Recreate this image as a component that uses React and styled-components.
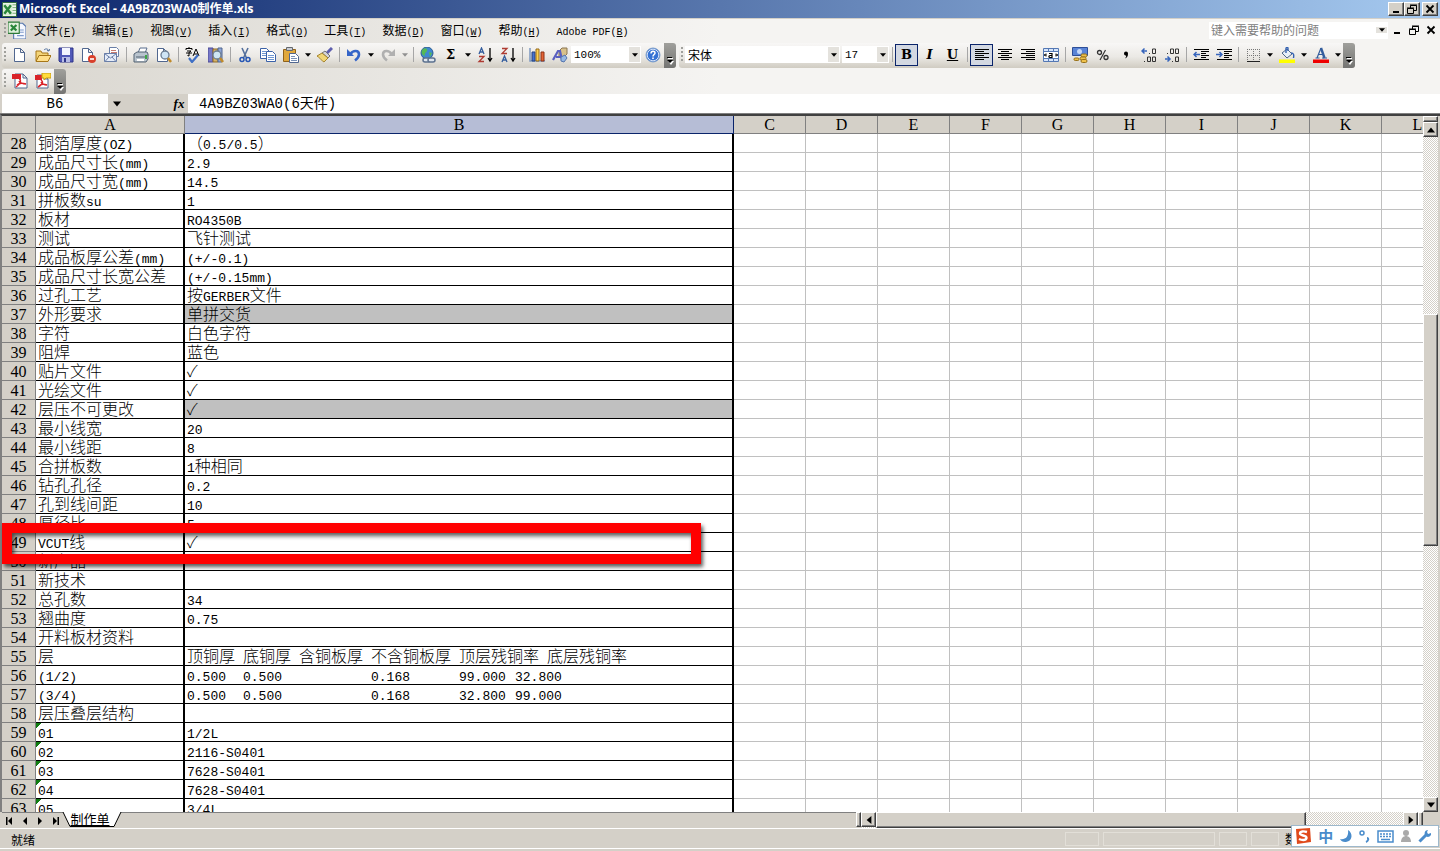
import React from 'react'
import styled, { createGlobalStyle, css, ThemeProvider } from 'styled-components'

const theme = {
  face: '#d4d0c8',
  border: '#808080',
  grid: '#c0c0c0',
  navy: '#0a246a',
  selected: '#b6bdd6',
  cjk: "'Noto Sans CJK SC', sans-serif",
  mono: "'Liberation Mono', 'Noto Sans CJK SC', monospace",
  serif: "'Liberation Serif', 'Noto Sans CJK SC', serif",
}

const GlobalStyle = createGlobalStyle`
  * {
    box-sizing: border-box;
  }
  body {
    margin: 0;
    overflow: hidden;
    background: #d4d0c8;
    color: #000;
  }
  button, input, select {
    margin: 0;
    padding: 0;
    border: 0;
    border-radius: 0;
    background: none;
    color: inherit;
    font: inherit;
    outline: none;
  }
  select {
    appearance: none;
  }
  svg {
    display: block;
    flex: none;
  }
`

const Window = styled.div`
  display: flex;
  flex-direction: column;
  height: 100vh;
  font-family: ${({ theme }) => theme.mono};
  font-size: 12px;
`

const TitleBar = styled.header`
  display: flex;
  align-items: center;
  height: 19px;
  padding: 0 2px;
  border-bottom: 1px solid #d4d0c8;
  background: linear-gradient(90deg, #0a246a, #a6caf0);
  color: #fff;
  h1 {
    flex: 1;
    margin: 0 0 0 2px;
    font: bold 12px/18px 'Open Sans', 'Noto Sans CJK SC', sans-serif;
    white-space: nowrap;
  }
`

const raised = css`
  border: 1px solid;
  border-color: #fff #404040 #404040 #fff;
  box-shadow: inset -1px -1px 0 #808080;
  background: ${({ theme }) => theme.face};
`

const CaptionButton = styled.button`
  ${raised}
  display: flex;
  align-items: center;
  justify-content: center;
  width: 16px;
  height: 14px;
  margin-left: ${({ $gap }) => ($gap ? '2px' : '0')};
  color: #000;
`

const Bars = styled.div`
  background: linear-gradient(90deg, #d9d6cf 0, #f5f4f2 50%);
`

const MenuBar = styled.nav`
  display: flex;
  align-items: center;
  height: 24px;
  padding: 0 1px 2px 2px;
`

const MenuButton = styled.button`
  flex: none;
  height: 20px;
  padding: 0 8px;
  font-family: ${({ theme }) => theme.cjk};
  font-size: 12px;
  line-height: 20px;
  white-space: nowrap;
  span {
    font-family: ${({ theme }) => theme.mono};
    font-size: 10px;
  }
`

const HelpBox = styled.div`
  display: flex;
  align-items: center;
  width: 179px;
  height: 17px;
  margin-left: auto;
  background: #fff;
  input {
    flex: 1;
    min-width: 0;
    padding: 0 2px;
    font: 12px/16px ${({ theme }) => theme.cjk};
  }
  input::placeholder {
    color: #808080;
    opacity: 1;
  }
`

const MdiButton = styled.button`
  display: flex;
  align-items: center;
  justify-content: center;
  width: 17px;
  height: 16px;
`

const ToolRow = styled.div`
  display: flex;
  gap: 3px;
  height: ${({ $short }) => ($short ? '25px' : '26px')};
  padding-left: 2px;
`

const ToolBar = styled.div`
  display: flex;
  align-items: center;
  height: 25px;
  padding-bottom: 2px;
  border-radius: 3px;
  background: linear-gradient(#f8f7f6, #ebe9e5 55%, #d0ccc2);
`

const Grip = styled.span`
  width: 6px;
  height: 15px;
  background: repeating-linear-gradient(#a0a09c 0 2px, transparent 2px 4px) 2px 0 / 2px 15px no-repeat;
`

const Divider = styled.span`
  width: 1px;
  height: 15px;
  margin: 0 2px 0 3px;
  background: #a6a6a6;
`

const ToolButton = styled.button`
  display: flex;
  align-items: center;
  justify-content: center;
  width: 23px;
  height: 22px;
  ${({ $on, theme }) =>
    $on &&
    css`
      border: 1px solid ${theme.navy};
      background: #d3d8e2;
    `}
`

const Letter = styled.span`
  font-family: 'DejaVu Serif', serif;
  font-size: 13px;
  font-weight: bold;
  font-style: ${({ $italic }) => ($italic ? 'italic' : 'normal')};
  line-height: 16px;
  text-decoration: ${({ $underline }) => ($underline ? 'underline' : 'none')};
`

const CaretButton = styled.button`
  display: flex;
  align-items: center;
  justify-content: center;
  width: 11px;
  height: 22px;
  color: ${({ disabled }) => (disabled ? '#909090' : '#000')};
`

const EndCap = styled.button`
  display: flex;
  align-items: flex-end;
  justify-content: center;
  width: 12px;
  height: 25px;
  margin-bottom: -2px;
  padding-bottom: 3px;
  border-radius: 0 3px 3px 0;
  background: linear-gradient(#a0a09c, #747472);
`

const Combo = styled.label`
  display: flex;
  width: ${({ $width }) => $width}px;
  height: 17px;
  margin-right: ${({ $gap }) => $gap || 0}px;
  background: #fff;
  select {
    flex: 1;
    min-width: 0;
    padding-left: 3px;
    font-family: ${({ $cjk, theme }) => ($cjk ? theme.cjk : theme.mono)};
    font-size: ${({ $cjk }) => ($cjk ? 12 : 11)}px;
    line-height: 14px;
  }
`

const ComboArrow = styled.span`
  display: flex;
  align-items: center;
  justify-content: center;
  width: 11px;
  margin: 1px;
  background: #e4e2dd;
`

const FormulaBar = styled.div`
  display: flex;
  height: 20px;
  padding-left: 2px;
  border-bottom: 1px solid ${({ theme }) => theme.border};
  background: ${({ theme }) => theme.face};
  font-size: 14px;
  input {
    min-width: 0;
    background: #fff;
    line-height: 18px;
  }
`

const NameBox = styled.input`
  width: 106px;
  text-align: center;
`

const NameArrow = styled.button`
  display: flex;
  align-items: center;
  justify-content: center;
  width: 17px;
`

const FxButton = styled.button`
  width: 18px;
  margin-left: 45px;
  font: italic bold 13px/17px 'Liberation Serif', serif;
`

const FormulaInput = styled.input`
  flex: 1;
  padding-left: 11px;
`

const Workbook = styled.main`
  position: relative;
  display: flex;
  flex: 1;
  min-height: 0;
  border-top: 2px solid #404040;
  border-left: 2px solid #808080;
`

const SheetPane = styled.div`
  flex: 1;
  min-width: 0;
  overflow: hidden;
  background: #fff;
`

const Sheet = styled.table`
  width: 1452px;
  table-layout: fixed;
  border-collapse: separate;
  border-spacing: 0;
`

const Col = styled.col`
  width: ${({ $width }) => $width}px;
`

const ColumnHead = styled.th`
  height: 18px;
  padding: 1px 0 0;
  border-right: 1px solid ${({ theme }) => theme.border};
  border-bottom: 1px solid ${({ theme }) => theme.border};
  background: ${({ theme }) => theme.face};
  font: 16px/16px ${({ theme }) => theme.serif};
  ${({ $selected, theme }) =>
    $selected &&
    css`
      border-color: ${theme.navy};
      background: ${theme.selected};
    `}
`

const RowHead = styled.th`
  height: 19px;
  padding: 2px 0 0;
  border-right: 1px solid ${({ theme }) => theme.border};
  border-bottom: 1px solid ${({ theme }) => theme.border};
  background: ${({ theme }) => theme.face};
  font: 16px/16px ${({ theme }) => theme.serif};
`

const Cell = styled.td`
  height: 19px;
  padding: 0 2px;
  border-right: 1px solid ${({ theme }) => theme.grid};
  border-bottom: 1px solid ${({ theme }) => theme.grid};
  vertical-align: top;
  ${({ $boxed }) =>
    $boxed &&
    css`
      border-right: 2px solid #000;
      border-bottom: 1px solid #000;
    `}
  ${({ $shaded }) => $shaded && 'background-color: #c0c0c0;'}
  ${({ $flagged }) =>
    $flagged && 'background-image: linear-gradient(135deg, #107c10 4px, transparent 4px);'}
`

const CellText = styled.div`
  font: 300 16px/16px ${({ theme }) => theme.cjk};
  white-space: pre;
  tab-size: 8px;
`

const Latin = styled.span`
  font: 13px/13px ${({ theme }) => theme.mono};
`

const Highlight = styled.div`
  position: absolute;
  top: 407px;
  left: 0;
  width: 699px;
  height: 41px;
  border: 10px solid #f00;
  box-shadow: 2px 3px 4px rgba(0, 0, 0, 0.65), inset 2px 3px 4px rgba(0, 0, 0, 0.65);
  pointer-events: none;
`

const dither = css`
  background: repeating-conic-gradient(#d4d0c8 0 25%, #fff 0 50%) 0 0 / 2px 2px;
`

const VScroll = styled.div`
  display: flex;
  flex-direction: column;
  width: 17px;
  border-right: 2px solid ${({ theme }) => theme.face};
  ${dither}
`

const HScroll = styled.div`
  display: flex;
  flex: 557 1 0;
  ${dither}
`

const ScrollButton = styled.button`
  ${raised}
  display: flex;
  flex: none;
  align-items: center;
  justify-content: center;
  width: 15px;
  height: 15px;
`

const SplitBox = styled.span`
  ${raised}
  flex: none;
  width: ${({ $vertical }) => ($vertical ? '5px' : '15px')};
  height: ${({ $vertical }) => ($vertical ? '15px' : '6px')};
`

const Thumb = styled.span`
  ${raised}
  flex: ${({ $size }) => $size} 1 0;
`

const Space = styled.span`
  flex: ${({ $size }) => $size} 1 0;
`

const TabRow = styled.div`
  display: flex;
  height: 16px;
  padding: 0 17px 0 2px;
  background: ${({ theme }) => theme.face};
`

const Tabs = styled.div`
  display: flex;
  flex: 854 1 0;
  border-top: 1px solid ${({ theme }) => theme.border};
`

const TabNav = styled.button`
  display: flex;
  align-items: center;
  justify-content: center;
  width: 15px;
  height: 15px;
`

const Tab = styled.button`
  position: relative;
  width: 60px;
  height: 15px;
  padding: 0 4px 3px 0;
  font: 13px/12px ${({ theme }) => theme.cjk};
  svg {
    position: absolute;
    top: -1px;
    left: 0;
  }
  span {
    position: relative;
    text-decoration: underline;
  }
`

const StatusBar = styled.footer`
  position: relative;
  display: flex;
  align-items: center;
  height: 23px;
  padding: 0 148px 2px 11px;
  border-top: 1px solid #fff;
  background: linear-gradient(#fff, #fff) 0 19px / 100% 1px no-repeat, ${({ theme }) => theme.face};
  font-family: ${({ theme }) => theme.cjk};
`

const StatusSlots = styled.div`
  display: flex;
  gap: 4px;
  margin-left: auto;
`

const Slot = styled.span`
  width: ${({ $width }) => $width}px;
  height: 14px;
  border: 1px solid #e2dfd8;
`

const ClippedStatus = styled.span`
  width: 7px;
  height: 16px;
  margin-left: 6px;
  overflow: hidden;
  line-height: 16px;
`

const ImeBar = styled.div`
  position: absolute;
  right: 1px;
  bottom: 4px;
  display: flex;
  align-items: center;
  justify-content: space-between;
  width: 148px;
  height: 22px;
  padding: 0 6px 0 2px;
  border: 1px solid #9db8cc;
  background: #fff;
  button {
    color: #4a8ccb;
    font: bold 15px/18px ${({ theme }) => theme.cjk};
  }
`

const Caret = ({ dir = 'down', size = 6 }) => {
  const paths = {
    down: 'M0 1h5L2.5 4z',
    up: 'M0 4h5L2.5 1z',
    left: 'M4 0v5L1 2.5z',
    right: 'M1 0v5l3-2.5z',
  }
  return (
    <svg width={size} height={size} viewBox="0 0 5 5" fill="currentColor">
      <path d={paths[dir]} />
    </svg>
  )
}

const WinIcon = ({ kind }) => (
  <svg width="10" height="10" viewBox="0 0 10 10" fill="none" stroke="currentColor">
    {kind === 'min' && <path d="M2 8h6" strokeWidth="2" />}
    {kind === 'restore' && (
      <>
        <path d="M3.500 4V1.500h6v5H7M3 1h7" />
        <path d="M.5 4.500h6v5h-6zM0 4h7" />
      </>
    )}
    {kind === 'close' && <path d="M1.500 1.500l7 7m0-7l-7 7" strokeWidth="1.800" />}
  </svg>
)

const Page = ({ x = 2, y = 1, w = 11, h = 14 }) => (
  <path
    d={`M${x} ${y}h${w - 4}l4 4v${h - 4}h-${w}z M${x + w - 4} ${y}v4h4`}
    fill="#fff"
    stroke="#51678f"
  />
)

const Lens = () => (
  <>
    <circle cx="9" cy="8" r="4" fill="#cfe5f5" stroke="#6b7c91" strokeWidth="1.300" />
    <path d="M12 11l3 4" stroke="#c08a2a" strokeWidth="2.500" />
  </>
)

const lines = (rows) => (
  <path d={rows.map(([x, w], i) => `M${x} ${2.5 + i * 2}h${w}`).join('')} stroke="#000" />
)

const icons = {
  excel: (
    <>
      <path d="M.5 .5h15v15H.5z" fill="#eef6ec" stroke="#2d6b35" />
      <path d="M11 3h4M11 6h4M11 9h4M11 12h4" stroke="#72a86e" />
      <path d="M1 2h10v12H1z" fill="#d8ecd4" />
      <path d="M2.500 3.500l7 9m0-9l-7 9" stroke="#27863a" strokeWidth="2.600" />
    </>
  ),
  book: (
    <>
      <path d="M5 2h8l3 3v11H5z" fill="#f5f8ff" stroke="#5777ae" />
      <path d="M10 8h4M10 10h4M8 13h6" stroke="#7f9bcb" />
      <path d="M0 1h10v10H0z" fill="#dff0dc" stroke="#2d7b38" />
      <path d="M2.500 3.500l5 5m0-5l-5 5" stroke="#27863a" strokeWidth="2" />
    </>
  ),
  blank: <Page x={2.5} y={1.5} w={10} h={13} />,
  open: (
    <>
      <path d="M1 14V4h5l1 2h6v3" fill="#f4d579" stroke="#a67618" />
      <path d="M1 14.500l3-6h12l-3 6z" fill="#ffdf8a" stroke="#a67618" />
      <path d="M9 3c2-2 4-1 5 1m0 0l-2-.5M14 4l.5-2" fill="none" stroke="#52719f" />
    </>
  ),
  save: (
    <>
      <path d="M1 1h14v14H2l-1-1z" fill="#5159b8" stroke="#2e3589" />
      <path d="M4 1h8v7H4z" fill="#f3f5ff" />
      <path d="M4 10h8v5H4z" fill="#b7bce6" />
      <path d="M6 11h2v4H6z" fill="#2e3589" />
    </>
  ),
  permission: (
    <>
      <Page x={1.5} y={1.5} w={10} h={13} />
      <circle cx="11" cy="12" r="4" fill="#d8402c" />
      <path d="M9 12h4" stroke="#fff" strokeWidth="1.600" />
    </>
  ),
  mail: (
    <>
      <path d="M5.500 .5h7l2 2v7h-9z" fill="#fff" stroke="#6a7fa8" />
      <path d="M7 3.500h5M7 5.500h6" stroke="#c87b70" />
      <path d="M.5 6.500h12v8H.5z" fill="#e6edf9" stroke="#6a7fa8" />
      <path d="M.5 6.500l6 4.500 6-4.500M1 14.500L5 10m7 4.500L8 10" fill="none" stroke="#6a7fa8" />
    </>
  ),
  print: (
    <>
      <path d="M5 6l2-5h7l-2 5z" fill="#fff" stroke="#5b6f8f" />
      <path d="M1 7l3-2h10l1 2v5l-2 3H1z" fill="#b9c4ce" stroke="#536273" />
      <path d="M3 10h10" stroke="#536273" />
      <path d="M4 12h7v2H4z" fill="#fff" />
      <path d="M12 8h2v4h-2z" fill="#3fa747" />
    </>
  ),
  preview: (
    <>
      <Page x={1.5} y={1.5} w={10} h={13} />
      <Lens />
    </>
  ),
  spell: (
    <>
      <path d="M1 3V1.500h6V3M4 0v1M2 4h4L4 5.500V9L2.500 8.500M1 6h6" fill="none" stroke="#000" />
      <path d="M8 9l3-7 3 7M9 7h4" fill="none" stroke="#000" />
      <path d="M4 11l3 4 6-7" fill="none" stroke="#3f70c5" strokeWidth="2.200" />
    </>
  ),
  research: (
    <>
      <path d="M0 1h5v14H0z" fill="#7779c8" stroke="#4c4b94" />
      <path d="M5 2h5v13H5z" fill="#d8b367" stroke="#8c6a28" />
      <path d="M10 1h4v14h-4z" fill="#8ea6d8" stroke="#51678f" />
      <Lens />
    </>
  ),
  cut: (
    <>
      <path d="M5 1l4.500 10M11 1L6.500 11" stroke="#536f9c" strokeWidth="1.600" />
      <circle cx="5" cy="12.500" r="2" fill="none" stroke="#2656b4" strokeWidth="1.500" />
      <circle cx="11" cy="12.500" r="2" fill="none" stroke="#2656b4" strokeWidth="1.500" />
    </>
  ),
  copy: (
    <>
      <path d="M.5 1.500h6l3 3v7h-9z" fill="#fff" stroke="#3b62a8" />
      <path d="M2 4.500h4M2 6.500h5M2 8.500h5" stroke="#6f97d2" />
      <path d="M6.500 4.500h6l3 3v7h-9z" fill="#fff" stroke="#3b62a8" />
      <path d="M8 8.500h6M8 10.500h6M8 12.500h6" stroke="#6f97d2" />
    </>
  ),
  paste: (
    <>
      <path d="M.5 2.500h12v12H.5z" fill="#e0a83c" stroke="#8f621b" />
      <path d="M3.500 .5h6v3h-6z" fill="#c9cdd3" stroke="#65686d" />
      <path d="M6.500 6.500h6l3 3v6h-9z" fill="#fff" stroke="#51678f" />
      <path d="M8 9.500h4M8 11.500h6M8 13.500h6" stroke="#7890b5" />
    </>
  ),
  painter: (
    <>
      <path d="M15 1l-5 5" stroke="#5e5fae" strokeWidth="3" />
      <path d="M8 4l5 5-2 2-6-5z" fill="#d3d3d8" stroke="#777" />
      <path d="M5 6l6 5-4 4C5 14 2 10 0 9z" fill="#f1d677" stroke="#a5842e" />
    </>
  ),
  undo: (
    <>
      <path d="M4.500 7C7 3 13 3 13 7.500c0 3-2 4.500-4 6" fill="none" stroke="#3565c8" strokeWidth="2.600" />
      <path d="M1 2v7h7z" fill="#3565c8" />
    </>
  ),
  redo: (
    <>
      <path d="M11.500 7C9 3 3 3 3 7.500c0 3 2 4.500 4 6" fill="none" stroke="#b0b0b0" strokeWidth="2.600" />
      <path d="M15 2v7H8z" fill="#b0b0b0" />
    </>
  ),
  link: (
    <>
      <circle cx="7" cy="6" r="6" fill="#3f87d0" stroke="#2a5b91" />
      <path d="M3 2c3-2 5 0 4 2S4 6 5 9C1 8 1 4 3 2zM9 5l3 1-2 4z" fill="#55b955" />
      <rect x="3" y="11" width="7" height="4" rx="2" fill="#dfe6ee" stroke="#5c718f" strokeWidth="1.500" />
      <rect x="8" y="11" width="7" height="4" rx="2" fill="#dfe6ee" stroke="#5c718f" strokeWidth="1.500" />
    </>
  ),
  sortAsc: (
    <>
      <path d="M2 7l2.500-6L7 7M3 5h3" fill="none" stroke="#345d9d" strokeWidth="1.300" />
      <path d="M2 9.500h5l-5 5h5" fill="none" stroke="#ae3b32" strokeWidth="1.300" />
      <path d="M13 1v13m-2-3l2 3 2-3" fill="none" stroke="#000" strokeWidth="1.300" />
    </>
  ),
  sortDesc: (
    <>
      <path d="M2 1.500h5l-5 5h5" fill="none" stroke="#ae3b32" strokeWidth="1.300" />
      <path d="M2 15l2.500-6L7 15M3 13h3" fill="none" stroke="#345d9d" strokeWidth="1.300" />
      <path d="M13 1v13m-2-3l2 3 2-3" fill="none" stroke="#000" strokeWidth="1.300" />
    </>
  ),
  chart: (
    <>
      <path d="M1 1v13h15" fill="none" stroke="#7b96c0" strokeWidth="1.500" />
      <path d="M3 5h3v9H3z" fill="#4672cf" stroke="#27437f" />
      <path d="M7 2h3v12H7z" fill="#ffd24d" stroke="#94681a" />
      <path d="M12 5h3v9h-3z" fill="#e46435" stroke="#8c3217" />
    </>
  ),
  drawing: (
    <>
      <path d="M7 4l3-3h5v6l-3 3H7z" fill="#d8c18b" stroke="#8b7653" />
      <path d="M1 13L6 4h2l2 9M4 10h5" fill="none" stroke="#5a5fc0" strokeWidth="2.200" />
      <path d="M9 10l4-2 2 3-3 4-3-1z" fill="#96b8e4" stroke="#5374ad" />
    </>
  ),
  help: (
    <>
      <circle cx="8" cy="8" r="7" fill="#3572d4" stroke="#7f9fc9" />
      <circle cx="8" cy="8" r="5.800" fill="none" stroke="#fff" strokeWidth=".8" />
      <path d="M6 6.500c0-3 4-3 4-.5 0 1.500-2 1.500-2 3.500" fill="none" stroke="#fff" strokeWidth="1.500" />
      <path d="M7.200 10.500h1.600v1.500H7.200z" fill="#fff" />
    </>
  ),
  left: lines([[1, 14], [1, 9], [1, 14], [1, 9], [1, 14], [1, 9]]),
  center: lines([[1, 14], [4, 8], [1, 14], [4, 8], [1, 14], [4, 8]]),
  right: lines([[1, 14], [6, 9], [1, 14], [6, 9], [1, 14], [6, 9]]),
  merge: (
    <>
      <path d="M0.500 1.500h15v13H.5zM.5 4.500h15M.5 11.500h15M5.500 1v3M10.500 1v3M5.500 12v3M10.500 12v3" fill="#d7e5fa" stroke="#5478b4" />
      <path d="M1 5h14v6H1z" fill="#fff" />
      <path d="M1 8h3m8 0h3M3 6.500L1.500 8 3 9.500M13 6.500L14.500 8 13 9.500" fill="none" stroke="#000" />
      <path d="M6 6.500h3v4H7c-1.500 0-1.500-2 0-2h2" fill="none" stroke="#000" strokeWidth="1.200" />
    </>
  ),
  currency: (
    <>
      <path d="M.5 .5h15v8H.5z" fill="#5a84d6" stroke="#2e4f98" />
      <circle cx="7.500" cy="4.500" r="2.500" fill="#c5d8f7" />
      <rect x="9" y="7" width="6" height="3" rx="1.500" fill="#efc14b" stroke="#96701a" />
      <rect x="8" y="10" width="6" height="3" rx="1.500" fill="#efc14b" stroke="#96701a" />
      <rect x="9" y="12.500" width="6" height="3" rx="1.500" fill="#efc14b" stroke="#96701a" />
      <rect x="2" y="11" width="5" height="2.500" rx="1.200" fill="#efc14b" stroke="#96701a" />
    </>
  ),
  percent: (
    <>
      <circle cx="4.500" cy="5.500" r="2" fill="none" stroke="#333" strokeWidth="1.300" />
      <circle cx="11" cy="10.500" r="2" fill="none" stroke="#333" strokeWidth="1.300" />
      <path d="M10.500 3L5 13" stroke="#333" strokeWidth="1.200" />
    </>
  ),
  comma: <path d="M6 6.500a2 2 0 1 1 4 0c0 3-1 4-3 5 1-1.500 1.500-2 1-3C7 8.500 6 8 6 6.500z" fill="#000" />,
  decInc: (
    <>
      <path d="M1 4h5M3.500 1.500L1 4l2.500 2.500" fill="none" stroke="#3765bc" strokeWidth="1.500" />
      <path d="M8 6.500h1M11.500 2h3v4.500h-3zM3 14.500h1M6.500 10h3v4.500h-3zM11.500 10h3v4.500h-3z" fill="none" stroke="#333" />
    </>
  ),
  decDec: (
    <>
      <path d="M1 12h5m-2.500-2.500L6 12l-2.500 2.500" fill="none" stroke="#3765bc" strokeWidth="1.500" />
      <path d="M3 6.500h1M6.500 2h3v4.500h-3zM11.500 2h3v4.500h-3zM8 14.500h1M11.500 10h3v4.500h-3z" fill="none" stroke="#333" />
    </>
  ),
  outdent: (
    <>
      <path d="M1 2.500h15M8 4.500h8M8 6.500h5M8 8.500h8M8 10.500h5M1 12.500h15" stroke="#000" />
      <path d="M1 7.500h6M3.500 5L1 7.500 3.500 10" fill="none" stroke="#3765bc" strokeWidth="1.500" />
    </>
  ),
  indent: (
    <>
      <path d="M1 2.500h15M8 4.500h8M8 6.500h5M8 8.500h8M8 10.500h5M1 12.500h15" stroke="#000" />
      <path d="M0 7.500h6M3.500 5L6 7.500 3.500 10" fill="none" stroke="#3765bc" strokeWidth="1.500" />
    </>
  ),
  borders: (
    <>
      <path d="M2.500 2v12M8.500 2v12M14.500 2v12M2 2.500h13M2 8.500h13" stroke="#777" strokeDasharray="1 1" />
      <path d="M2 14.500h13" stroke="#222" />
    </>
  ),
  fill: (
    <>
      <path d="M3 6l5-4 5 5-5 4z" fill="#e9f0f8" stroke="#4c6487" />
      <path d="M7 6V1.500c0-1.500 2-1.500 2 0V4M12 6c3 0 3 2 2.500 5" fill="none" stroke="#3462b2" strokeWidth="1.400" />
      <path d="M0 12.500h16V16H0z" fill="#ff0" />
    </>
  ),
  fontColor: (
    <>
      <path d="M4 11l4-10M5.500 7.500h5M2.500 11h4M9 11h5" fill="none" stroke="#345d9d" strokeWidth="1.200" />
      <path d="M8 1l3.500 10" stroke="#345d9d" strokeWidth="2.400" />
      <path d="M0 12.500h16V16H0z" fill="#e00" />
    </>
  ),
  pdf: (
    <>
      <Page x={3} y={1} w={12} />
      <path d="M0 1h9v5H0z" fill="#d9232a" />
      <path d="M7 5c3 3 1 6-3 9M7 8c1 2 4 3 7 3M5 12c2-2 6-2 9-1" fill="none" stroke="#d9232a" strokeWidth="1.500" />
    </>
  ),
  pdfMail: (
    <>
      <Page x={2} y={2} w={11} h={13} />
      <path d="M0 2h7v5H0z" fill="#d9232a" />
      <path d="M6 7c3 2 1 5-3 7M6 9c1 2 3 3 6 3M4 13c2-2 5-2 8-1" fill="none" stroke="#d9232a" strokeWidth="1.500" />
      <path d="M7 0h9v5h-5l-2 2V5H7z" fill="#ffdc3b" stroke="#c69b15" />
    </>
  ),
}

const letters = {
  bold: <Letter>B</Letter>,
  italic: <Letter $italic>I</Letter>,
  underline: <Letter $underline>U</Letter>,
  sum: <Letter>Σ</Letter>,
}

const Icon = ({ name, size = 16 }) => (
  <svg width={size} height={size} viewBox="0 0 16 16">
    {icons[name]}
  </svg>
)

const Tools = ({ items }) =>
  items.map((item, i) => {
    if (item === '|') return <Divider key={i} />
    if (item === 'v') return <CaretButton key={i} aria-label="更多"><Caret /></CaretButton>
    if (item === 'x') return <CaretButton key={i} aria-label="更多" disabled><Caret /></CaretButton>
    const on = item.startsWith('*')
    const name = item.replace('*', '')
    return (
      <ToolButton key={i} $on={on} aria-label={name} aria-pressed={on}>
        {letters[name] || <Icon name={name} />}
      </ToolButton>
    )
  })

const ToolCap = () => (
  <EndCap aria-label="工具栏选项">
    <svg width="8" height="9" viewBox="0 0 8 9">
      <path d="M2 2h5v1H2zM2 5h6L5 9z" fill="#fff" />
      <path d="M1 1h5v1H1zM1 4h6L4 7z" fill="#000" />
    </svg>
  </EndCap>
)

const ComboBox = ({ label, value, ...rest }) => (
  <Combo {...rest}>
    <select aria-label={label} defaultValue={value}>
      <option>{value}</option>
    </select>
    <ComboArrow>
      <Caret />
    </ComboArrow>
  </Combo>
)

const menus = [
  ['文件', 'F'],
  ['编辑', 'E'],
  ['视图', 'V'],
  ['插入', 'I'],
  ['格式', 'O'],
  ['工具', 'T'],
  ['数据', 'D'],
  ['窗口', 'W'],
  ['帮助', 'H'],
]

const columns = ['A', 'B', 'C', 'D', 'E', 'F', 'G', 'H', 'I', 'J', 'K', 'L']
const widths = { A: 149, B: 549 }

const FIRST_ROW = 28
const rows = [
  ['铜箔厚度(OZ)', '（0.5/0.5）'],
  ['成品尺寸长(mm)', '2.9'],
  ['成品尺寸宽(mm)', '14.5'],
  ['拼板数su', '1'],
  ['板材', 'RO4350B'],
  ['测试', '飞针测试'],
  ['成品板厚公差(mm)', '(+/-0.1)'],
  ['成品尺寸长宽公差', '(+/-0.15mm)'],
  ['过孔工艺', '按GERBER文件'],
  ['外形要求', '单拼交货', 'shaded'],
  ['字符', '白色字符'],
  ['阻焊', '蓝色'],
  ['贴片文件', '✓'],
  ['光绘文件', '✓'],
  ['层压不可更改', '✓', 'shaded'],
  ['最小线宽', '20'],
  ['最小线距', '8'],
  ['合拼板数', '1种相同'],
  ['钻孔孔径', '0.2'],
  ['孔到线间距', '10'],
  ['厚径比', '5'],
  ['VCUT线', '✓'],
  ['新产品', ''],
  ['新技术', ''],
  ['总孔数', '34'],
  ['翘曲度', '0.75'],
  ['开料板材资料', ''],
  ['层', '顶铜厚 底铜厚 含铜板厚 不含铜板厚 顶层残铜率 底层残铜率'],
  ['(1/2)', '0.500  0.500           0.168      99.000 32.800'],
  ['(3/4)', '0.500  0.500           0.168      32.800 99.000'],
  ['层压叠层结构', ''],
  ['01', '1/2L', 'flagged'],
  ['02', '2116-S0401', 'flagged'],
  ['03', '7628-S0401', 'flagged'],
  ['04', '7628-S0401', 'flagged'],
  ['05', '3/4L', 'flagged'],
]

// spaces become tabs so that values in one cell line up on the 8px stops
const MixedText = ({ children }) => (
  <CellText>
    {children
      .replace(/ /g, '\t')
      .split(/([\u2713\u2e80-\uffff]+)/)
      .filter(Boolean)
      .map((run, i) => (/[\u2713\u2e80-\uffff]/.test(run) ? run : <Latin key={i}>{run}</Latin>))}
  </CellText>
)

const SheetTable = () => (
  <Sheet>
    <colgroup>
      <Col $width={34} />
      {columns.map((name) => (
        <Col key={name} $width={widths[name] || 72} />
      ))}
    </colgroup>
    <thead>
      <tr>
        <ColumnHead />
        {columns.map((name) => (
          <ColumnHead key={name} $selected={name === 'B'}>
            {name}
          </ColumnHead>
        ))}
      </tr>
    </thead>
    <tbody>
      {rows.map(([label, value, kind], i) => (
        <tr key={i}>
          <RowHead>{FIRST_ROW + i}</RowHead>
          <Cell $boxed $flagged={kind === 'flagged'}>
            <MixedText>{label}</MixedText>
          </Cell>
          <Cell $boxed $shaded={kind === 'shaded'}>
            <MixedText>{value}</MixedText>
          </Cell>
          {columns.slice(2).map((name) => (
            <Cell key={name} />
          ))}
        </tr>
      ))}
    </tbody>
  </Sheet>
)

const SheetTabs = () => (
  <TabRow>
    <Tabs>
      {['first', 'left', 'right', 'last'].map((kind) => (
        <TabNav key={kind} aria-label={kind}>
          <svg width="8" height="8" viewBox="0 0 8 8">
            {kind === 'first' && <path d="M0 0h1.500v8H0zM6 0v8L2 4z" />}
            {kind === 'left' && <path d="M6 0v8L2 4z" />}
            {kind === 'right' && <path d="M2 0v8l4-4z" />}
            {kind === 'last' && <path d="M6.500 0H8v8H6.500zM2 0v8l4-4z" />}
          </svg>
        </TabNav>
      ))}
      <Tab>
        <svg width="60" height="16" viewBox="0 0 60 16">
          <path d="M1 0l7 14.500h44L59 0" fill="#fff" stroke="#000" />
        </svg>
        <span>制作单</span>
      </Tab>
    </Tabs>
    <SplitBox $vertical />
    <HScroll>
      <ScrollButton aria-label="向左"><Caret dir="left" size={8} /></ScrollButton>
      <Thumb $size={429} />
      <Space $size={97} />
      <ScrollButton aria-label="向右"><Caret dir="right" size={8} /></ScrollButton>
    </HScroll>
    <SplitBox $vertical />
  </TabRow>
)

const Ime = () => (
  <ImeBar>
    <svg width="18" height="18" viewBox="0 0 18 18">
      <path d="M2 2l14-1 1 14-14 2z" fill="#e04a1c" />
      <path d="M13 5c-3-1-7-1-7 1.500S13 8 12.500 11 7 13 5 12" fill="none" stroke="#fff" strokeWidth="2.400" />
    </svg>
    <button>中</button>
    <svg width="14" height="14" viewBox="0 0 14 14" fill="#4a8ccb">
      <path d="M9 1c5 3 5 11-2 12-3 .3-5-1-6-3 5 1 9-2 8-9z" />
    </svg>
    <svg width="11" height="14" viewBox="0 0 11 14" fill="none" stroke="#4a8ccb">
      <circle cx="3" cy="4" r="2" strokeWidth="1.500" />
      <path d="M8 9c2 0 1.500 3-1 4" strokeWidth="2" />
    </svg>
    <svg width="17" height="13" viewBox="0 0 17 13">
      <path d="M1 1h15v11H1z" fill="#fff" stroke="#4a8ccb" strokeWidth="1.500" />
      <path d="M3 4h11M3 6.500h11" stroke="#4a8ccb" strokeWidth="1.500" strokeDasharray="2 1" />
      <path d="M4 9.500h9" stroke="#4a8ccb" strokeWidth="1.500" />
    </svg>
    <svg width="12" height="14" viewBox="0 0 12 14" fill="#aaa">
      <circle cx="6" cy="4" r="3" />
      <path d="M1 13c0-8 10-8 10 0z" />
    </svg>
    <svg width="14" height="14" viewBox="0 0 14 14">
      <path d="M1.500 12.500L8 6" stroke="#4a8ccb" strokeWidth="3" />
      <path d="M10 1C7 1 6 4 7 6s4 3 6 0V4l-3 1-1-2z" fill="#4a8ccb" />
    </svg>
  </ImeBar>
)

export default function App() {
  return (
    <ThemeProvider theme={theme}>
      <GlobalStyle />
      <Window>
        <TitleBar>
          <Icon name="excel" size={15} />
          <h1>Microsoft Excel - 4A9BZ03WA0制作单.xls</h1>
          <CaptionButton aria-label="最小化"><WinIcon kind="min" /></CaptionButton>
          <CaptionButton aria-label="还原"><WinIcon kind="restore" /></CaptionButton>
          <CaptionButton aria-label="关闭" $gap><WinIcon kind="close" /></CaptionButton>
        </TitleBar>
        <Bars>
          <MenuBar>
            <Grip />
            <Icon name="book" size={18} />
            {menus.map(([name, key]) => (
              <MenuButton key={key}>
                {name}
                <span>(<u>{key}</u>)</span>
              </MenuButton>
            ))}
            <MenuButton>
              <span>Adobe PDF(<u>B</u>)</span>
            </MenuButton>
            <HelpBox>
              <input aria-label="帮助" placeholder="键入需要帮助的问题" />
              <ComboArrow><Caret /></ComboArrow>
            </HelpBox>
            <MdiButton aria-label="最小化窗口"><WinIcon kind="min" /></MdiButton>
            <MdiButton aria-label="还原窗口"><WinIcon kind="restore" /></MdiButton>
            <MdiButton aria-label="关闭窗口"><WinIcon kind="close" /></MdiButton>
          </MenuBar>
          <ToolRow>
            <ToolBar>
              <Grip />
              <Tools items={['blank', 'open', 'save', 'permission', 'mail', '|', 'print', 'preview', '|', 'spell', 'research', '|']} />
              <Tools items={['cut', 'copy', 'paste', 'v', 'painter', '|', 'undo', 'v', 'redo', 'x', '|']} />
              <Tools items={['link', 'sum', 'v', 'sortAsc', 'sortDesc', '|', 'chart', 'drawing']} />
              <ComboBox label="显示比例" value="100%" $width={70} />
              <Tools items={['help']} />
              <ToolCap />
            </ToolBar>
            <ToolBar>
              <Grip />
              <ComboBox label="字体" value="宋体" $width={155} $gap={2} $cjk />
              <ComboBox label="字号" value="17" $width={47} />
              <Tools items={['|', '*bold', 'italic', 'underline', '|', '*left', 'center', 'right', 'merge', '|']} />
              <Tools items={['currency', 'percent', 'comma', 'decInc', 'decDec', '|', 'outdent', 'indent', '|']} />
              <Tools items={['borders', 'v', 'fill', 'v', 'fontColor', 'v']} />
              <ToolCap />
            </ToolBar>
          </ToolRow>
          <ToolRow $short>
            <ToolBar>
              <Grip />
              <Tools items={['pdf', 'pdfMail']} />
              <ToolCap />
            </ToolBar>
          </ToolRow>
        </Bars>
        <FormulaBar>
          <NameBox aria-label="名称框" defaultValue="B6" />
          <NameArrow aria-label="名称列表"><Caret size={8} /></NameArrow>
          <FxButton>fx</FxButton>
          <FormulaInput aria-label="编辑栏" defaultValue="4A9BZ03WA0(6天件)" />
        </FormulaBar>
        <Workbook>
          <SheetPane>
            <SheetTable />
          </SheetPane>
          <Highlight />
          <VScroll>
            <SplitBox />
            <ScrollButton aria-label="向上"><Caret dir="up" size={8} /></ScrollButton>
            <Space $size={178} />
            <Thumb $size={231} />
            <Space $size={252} />
            <ScrollButton aria-label="向下"><Caret size={8} /></ScrollButton>
          </VScroll>
        </Workbook>
        <SheetTabs />
        <StatusBar>
          就绪
          <StatusSlots>
            <Slot $width={34} />
            <Slot $width={112} />
            <Slot $width={28} />
            <Slot $width={28} />
          </StatusSlots>
          <ClippedStatus>数</ClippedStatus>
          <Ime />
        </StatusBar>
      </Window>
    </ThemeProvider>
  )
}
